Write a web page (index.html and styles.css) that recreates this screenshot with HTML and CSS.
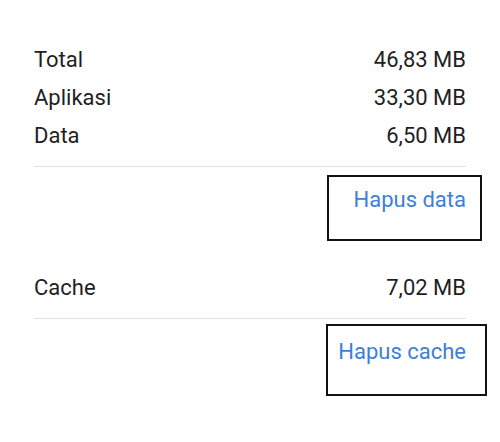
FILE: index.html
```html
<!DOCTYPE html>
<html lang="id">
<head>
  <meta charset="UTF-8">
  <meta name="viewport" content="width=device-width, initial-scale=1.0">
  <title>Penyimpanan</title>
  <link rel="stylesheet" href="styles.css">
</head>
<body>

  <div class="storage">
    <div class="row"><span>Total</span><span>46,83 MB</span></div>
    <div class="row"><span>Aplikasi</span><span>33,30 MB</span></div>
    <div class="row"><span>Data</span><span>6,50 MB</span></div>
  </div>
  <div class="divider"></div>
  <div class="action action-data">
    <span class="action-btn">Hapus data</span>
  </div>

  <div class="storage">
    <div class="row"><span>Cache</span><span>7,02 MB</span></div>
  </div>
  <div class="divider"></div>
  <div class="action action-cache">
    <span class="action-btn">Hapus cache</span>
  </div>

</body>
</html>
```

FILE: styles.css
```css
body {
  font-family: Roboto, 'Noto Sans', sans-serif;
  background: #fff;
  color: #1f1f1f;
  margin: 0;
  padding: 41px 34px 0;
  font-size: 22px;
}

.row {
  display: flex;
  justify-content: space-between;
  height: 38px;
  line-height: 38px;
}

.divider {
  height: 1px;
  background: #e2e2e2;
  margin-top: 11px;
}

.action {
  position: relative;
  display: flex;
  justify-content: flex-end;
  padding: 14px 0 50px;
  line-height: 38px;
}

.action-btn {
  color: #3e7fd7;
}

/* highlight box drawn over the button */
.action::after {
  content: "";
  position: absolute;
  border: 2px solid #111;
  box-sizing: border-box;
}

.action-data::after {
  top: 8px;
  right: -16px;
  width: 155px;
  height: 66px;
}

.action-cache::after {
  top: 5px;
  right: -21px;
  width: 161px;
  height: 72px;
}
```
